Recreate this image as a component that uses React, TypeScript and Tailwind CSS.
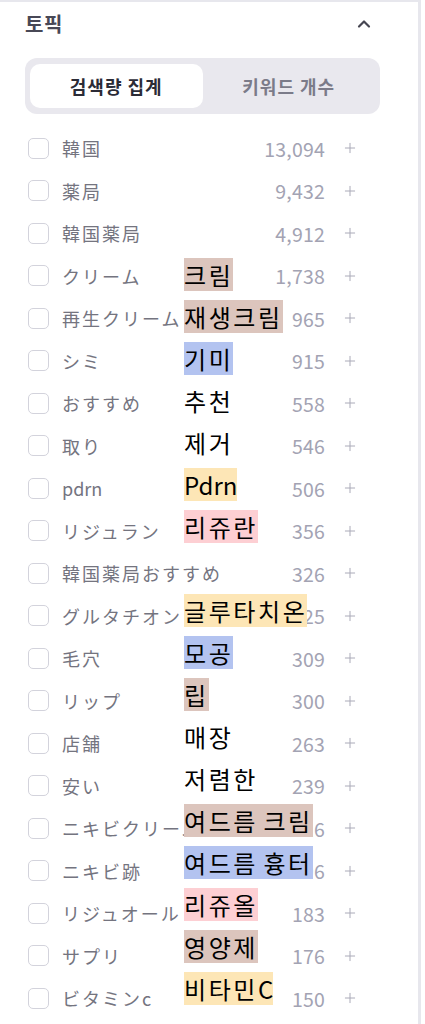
import { ChevronUp, Plus } from "lucide-react";

type Tone = "brown" | "blue" | "yellow" | "pink" | "none";

interface Topic {
  word: string;
  count: string;
  ko?: string;
  tone?: Tone;
}

const topics: Topic[] = [
  { word: "韓国", count: "13,094" },
  { word: "薬局", count: "9,432" },
  { word: "韓国薬局", count: "4,912" },
  { word: "クリーム", count: "1,738", ko: "크림", tone: "brown" },
  { word: "再生クリーム", count: "965", ko: "재생크림", tone: "brown" },
  { word: "シミ", count: "915", ko: "기미", tone: "blue" },
  { word: "おすすめ", count: "558", ko: "추천", tone: "none" },
  { word: "取り", count: "546", ko: "제거", tone: "none" },
  { word: "pdrn", count: "506", ko: "Pdrn", tone: "yellow" },
  { word: "リジュラン", count: "356", ko: "리쥬란", tone: "pink" },
  { word: "韓国薬局おすすめ", count: "326" },
  { word: "グルタチオン", count: "325", ko: "글루타치온", tone: "yellow" },
  { word: "毛穴", count: "309", ko: "모공", tone: "blue" },
  { word: "リップ", count: "300", ko: "립", tone: "brown" },
  { word: "店舗", count: "263", ko: "매장", tone: "none" },
  { word: "安い", count: "239", ko: "저렴한", tone: "none" },
  { word: "ニキビクリーム", count: "216", ko: "여드름 크림", tone: "brown" },
  { word: "ニキビ跡", count: "196", ko: "여드름 흉터", tone: "blue" },
  { word: "リジュオール", count: "183", ko: "리쥬올", tone: "pink" },
  { word: "サプリ", count: "176", ko: "영양제", tone: "brown" },
  { word: "ビタミンc", count: "150", ko: "비타민C", tone: "yellow" },
];

const toneClass: Record<Tone, string> = {
  brown: "bg-[#dcc5bd]",
  blue: "bg-[#b3c3f0]",
  yellow: "bg-[#fde6b6]",
  pink: "bg-[#fdcfd3]",
  none: "bg-transparent",
};

// wide glyphs (hangul, kana, kanji) get extra spacing, latin stays tight
const wideRun = /[\u3040-\u30ff\u4e00-\u9fff\uac00-\ud7a3]+|[^\u3040-\u30ff\u4e00-\u9fff\uac00-\ud7a3]+/g;
const isWide = (s: string) => /[\u3040-\u30ff\u4e00-\u9fff\uac00-\ud7a3]/.test(s);

function Spaced({ text, wide }: { text: string; wide: string }) {
  const runs = text.match(wideRun) ?? [];
  return (
    <>
      {runs.map((r, i) => (
        <span key={i} className={isWide(r) ? wide : ""}>
          {r}
        </span>
      ))}
    </>
  );
}

function TopicRow({ topic }: { topic: Topic }) {
  return (
    <div className="flex items-center h-[42.5px] pr-[22px]">
      <span className="ml-[3px] w-[21px] h-[21px] shrink-0 rounded-[5px] border-[1.5px] border-[#d3d3dc] bg-white" />
      <span className="ml-[13px] text-[18px] text-[#74747f] whitespace-nowrap leading-none">
        <Spaced text={topic.word} wide="tracking-[2px]" />
      </span>
      <span className="ml-auto text-[19.5px] tracking-[0.2px] text-[#a3a3b3] leading-none">
        {topic.count}
      </span>
      <Plus className="ml-[17px] w-[16px] h-[16px] text-[#aaaab8]" strokeWidth={1.5} />
    </div>
  );
}

export default function App() {
  return (
    <div className="w-[425px] min-h-[1024px] bg-white font-['Noto_Sans_CJK_KR','Noto_Sans',sans-serif]">
      <div className="w-[421px] min-h-[1024px] border-t-2 border-r-[3px] border-[#e7e7ed] pl-[25px] pr-[38px]">
        <div className="h-[44px] flex items-center justify-between pr-[6px]">
          <h2 className="text-[20px] tracking-[0.5px] font-bold text-[#484856] leading-none">토픽</h2>
          <ChevronUp className="w-[20px] h-[20px] text-[#464652]" strokeWidth={2.6} />
        </div>

        <div className="mt-[12px] h-[56px] rounded-[12px] bg-[#e9e8ee] px-[5px] py-[6px] grid grid-cols-2">
          <button
            type="button"
            className="rounded-[10px] bg-white text-[18px] tracking-[1px] font-bold text-[#2b2b36] leading-none"
          >
            검색량 집계
          </button>
          <button
            type="button"
            className="text-[18px] tracking-[1px] font-bold text-[#7b7b89] leading-none"
          >
            키워드 개수
          </button>
        </div>

        <div className="relative mt-[13px]">
          {topics.map((t) => (
            <TopicRow key={t.word} topic={t} />
          ))}

          {/* translation overlay */}
          <div className="absolute inset-0 pointer-events-none">
            {topics.map((t, i) =>
              t.ko ? (
                <span
                  key={t.word}
                  className={`absolute left-[159px] h-[33px] leading-[33px] text-[24px] text-black whitespace-nowrap ${toneClass[t.tone ?? "none"]}`}
                  style={{ top: 5 + i * 42 }}
                >
                  <Spaced text={t.ko} wide="tracking-[2.6px]" />
                </span>
              ) : null,
            )}
          </div>
        </div>
      </div>
    </div>
  );
}
